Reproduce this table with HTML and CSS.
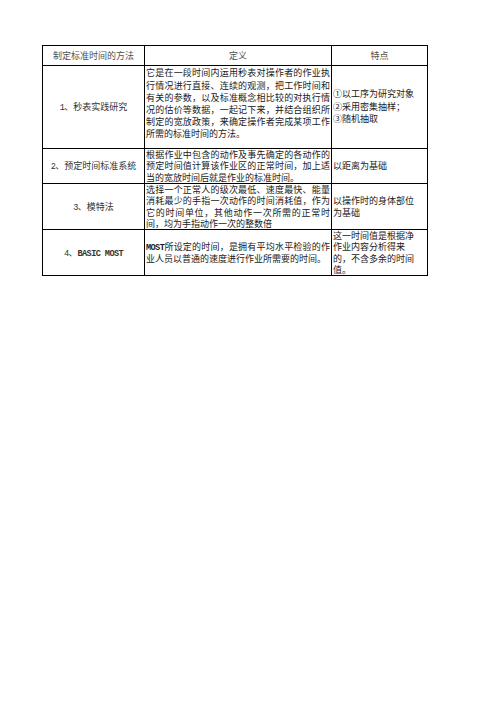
FILE: index.html
```html
<!DOCTYPE html>
<html lang="zh-CN">
<head>
<meta charset="utf-8">
<title>制定标准时间的方法</title>
<link rel="stylesheet" href="styles.css">
</head>
<body>
<table class="grid">
  <colgroup>
    <col class="col-method">
    <col class="col-def">
    <col class="col-feat">
  </colgroup>
  <thead>
    <tr class="row-head">
      <th>制定标准时间的方法</th>
      <th>定义</th>
      <th>特点</th>
    </tr>
  </thead>
  <tbody>
    <tr class="row-1">
      <td class="method"><span class="lat">1</span>、秒表实践研究</td>
      <td class="def def-tall">它是在一段时间内运用秒表对操作者的作业执行情况进行直接、连续的观测，把工作时间和有关的参数，以及标准概念相比较的对执行情况的估价等数据，一起记下来，并结合组织所制定的宽放政策，来确定操作者完成某项工作所需的标准时间的方法。</td>
      <td class="feat feat-tall">①以工序为研究对象<br>②采用密集抽样；<br>③随机抽取</td>
    </tr>
    <tr class="row-2">
      <td class="method"><span class="lat">2</span>、预定时间标准系统</td>
      <td class="def">根据作业中包含的动作及事先确定的各动作的预定时间值计算该作业区的正常时间，加上适当的宽放时间后就是作业的标准时间。</td>
      <td class="feat">以距离为基础</td>
    </tr>
    <tr class="row-3">
      <td class="method"><span class="lat">3</span>、模特法</td>
      <td class="def">选择一个正常人的级次最低、速度最快、能量消耗最少的手指一次动作的时间消耗值，作为它的时间单位，其他动作一次所需的正常时间，均为手指动作一次的整数倍</td>
      <td class="feat">以操作时的身体部位为基础</td>
    </tr>
    <tr class="row-4">
      <td class="method"><span class="lat">4</span>、<span class="lat bold">BASIC MOST</span></td>
      <td class="def"><span class="lat bold">MOST</span>所设定的时间，是拥有平均水平检验的作业人员以普通的速度进行作业所需要的时间。</td>
      <td class="feat">这一时间值是根据净作业内容分析得来的，不含多余的时间值。</td>
    </tr>
  </tbody>
</table>
</body>
</html>
```

FILE: styles.css
```css
html, body {
  margin: 0;
  padding: 0;
  background: #ffffff;
}

body {
  padding: 45px 0 0 42px;
  font-family: "Noto Sans CJK SC", "Noto Sans", sans-serif;
  font-size: 9px;
  color: #1a1a1a;
}

.grid {
  border-collapse: collapse;
  table-layout: fixed;
  width: 385px;
}

.col-method { width: 102px; }
.col-def { width: 187px; }
.col-feat { width: 96px; }

.grid th,
.grid td {
  border: 1px solid #000000;
  padding: 0 1px;
  vertical-align: middle;
  line-height: 11.3px;
  overflow: hidden;
}

.grid th {
  font-weight: normal;
  color: #505050;
  text-align: center;
}

.row-head { height: 20px; }
.row-1 { height: 83px; }
.row-2 { height: 35px; }
.row-3 { height: 44px; }
.row-4 { height: 45px; }

.grid .method {
  text-align: center;
  color: #333333;
}

.grid .def {
  text-align: justify;
}

.grid .def-tall {
  line-height: 12.2px;
  padding-bottom: 6px;
}

.grid .feat {
  text-align: left;
  padding-right: 8px;
}

.grid .feat-tall {
  line-height: 12.5px;
}

.lat {
  font-family: "Liberation Mono", "DejaVu Sans Mono", monospace;
  font-size: 8.6px;
  letter-spacing: -0.6px;
  line-height: 1;
}

.bold {
  font-weight: bold;
}
```
